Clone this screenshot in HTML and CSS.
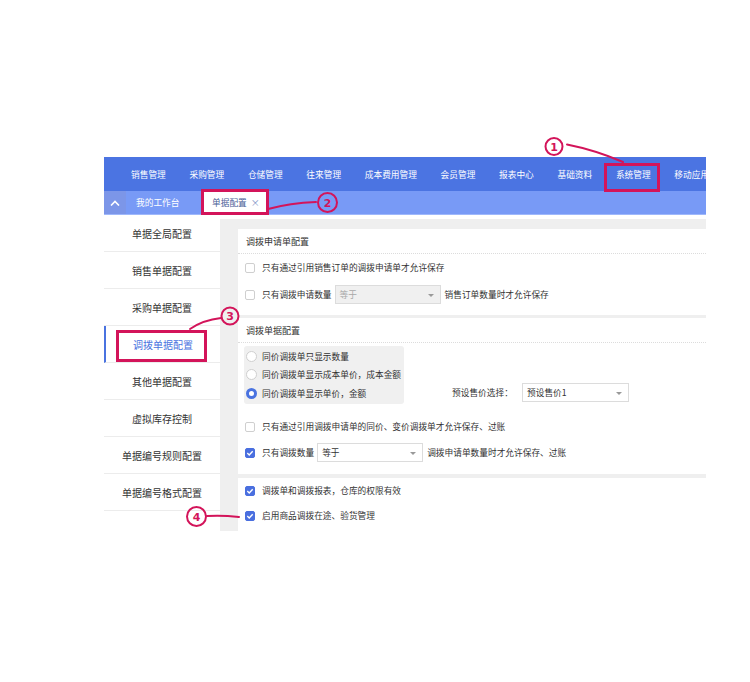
FILE: index.html
```html
<!DOCTYPE html>
<html lang="zh-CN">

<head>
  <meta charset="UTF-8">
  <meta name="viewport" content="width=device-width, initial-scale=1.0">
  <title>单据配置</title>
  <link rel="stylesheet" href="styles.css">
</head>

<body>
  <div class="app">
    <div class="topnav">
      <span>销售管理</span>
      <span>采购管理</span>
      <span>仓储管理</span>
      <span>往来管理</span>
      <span>成本费用管理</span>
      <span>会员管理</span>
      <span>报表中心</span>
      <span>基础资料</span>
      <span>系统管理</span>
      <span>移动应用</span>
    </div>

    <div class="tabbar">
      <div class="collapse">
        <svg width="10" height="6" viewBox="0 0 10 6"><path d="M1 5.5 L5 1.5 L9 5.5" fill="none" stroke="#fff" stroke-width="1.6"/></svg>
      </div>
      <div class="tab">我的工作台</div>
      <div class="tab active">单据配置 <span class="close">×</span></div>
    </div>

    <div class="main">
      <ul class="sidebar">
        <li>单据全局配置</li>
        <li>销售单据配置</li>
        <li>采购单据配置</li>
        <li class="current">调拨单据配置</li>
        <li>其他单据配置</li>
        <li>虚拟库存控制</li>
        <li>单据编号规则配置</li>
        <li>单据编号格式配置</li>
      </ul>

      <div class="content">
        <div class="panel panel-apply">
          <div class="panel-title">调拨申请单配置</div>
          <div class="row"><span class="check"></span>只有通过引用销售订单的调拨申请单才允许保存</div>
          <div class="row">
            <span class="check"></span>只有调拨申请数量
            <span class="select disabled">等于<i class="caret"></i></span>
            销售订单数量时才允许保存
          </div>
        </div>

        <div class="panel panel-transfer">
          <div class="panel-title">调拨单据配置</div>
          <div class="price-line">
            <div class="radio-group">
              <div class="radio-row"><span class="radio"></span>同价调拨单只显示数量</div>
              <div class="radio-row"><span class="radio"></span>同价调拨单显示成本单价，成本金额</div>
              <div class="radio-row"><span class="radio on"></span>同价调拨单显示单价，金额</div>
            </div>
            <div class="preset">
              <span class="preset-label">预设售价选择：</span>
              <span class="select">预设售价1<i class="caret"></i></span>
            </div>
          </div>
          <div class="rows">
            <div class="row"><span class="check"></span>只有通过引用调拨申请单的同价、变价调拨单才允许保存、过账</div>
            <div class="row">
              <span class="check on"><svg width="8" height="8" viewBox="0 0 8 8"><path d="M1.3 4.1 L3.2 5.9 L6.7 2.2" fill="none" stroke="#fff" stroke-width="1.4"/></svg></span>只有调拨数量
              <span class="select">等于<i class="caret"></i></span>
              调拨申请单数量时才允许保存、过账
            </div>
          </div>
        </div>

        <div class="panel panel-misc">
          <div class="row"><span class="check on"><svg width="8" height="8" viewBox="0 0 8 8"><path d="M1.3 4.1 L3.2 5.9 L6.7 2.2" fill="none" stroke="#fff" stroke-width="1.4"/></svg></span>调拨单和调拨报表，仓库的权限有效</div>
          <div class="row"><span class="check on"><svg width="8" height="8" viewBox="0 0 8 8"><path d="M1.3 4.1 L3.2 5.9 L6.7 2.2" fill="none" stroke="#fff" stroke-width="1.4"/></svg></span>启用商品调拨在途、验货管理</div>
        </div>
      </div>
    </div>
  </div>

  <!-- hand drawn markers over the screenshot -->
  <svg class="marks" width="750" height="682" viewBox="0 0 750 682">
    <g fill="none" stroke="#d3145a" stroke-width="3">
      <rect x="605.5" y="164.5" width="53" height="26"/>
      <rect x="202.5" y="190.5" width="65" height="23"/>
      <rect x="117.5" y="331.5" width="88" height="29"/>
    </g>
    <g fill="none" stroke="#d3145a" stroke-width="2" stroke-linecap="round">
      <circle cx="554" cy="146.5" r="8.5"/>
      <path d="M567 144.5 Q595 150 623 162"/>
      <circle cx="327.5" cy="202.5" r="9.5"/>
      <path d="M268 209 Q290 203 316 202"/>
      <circle cx="230" cy="316" r="8.5"/>
      <path d="M190 329 Q203 320 221 318"/>
      <circle cx="196.5" cy="516.5" r="9.5"/>
      <path d="M207 516 Q222 515 239 517"/>
    </g>
    <g class="mark-num" fill="#d3145a" text-anchor="middle">
      <text x="554" y="150.5">1</text>
      <text x="327.5" y="206.5">2</text>
      <text x="230" y="320">3</text>
      <text x="196.5" y="520.5">4</text>
    </g>
  </svg>
</body>

</html>
```

FILE: styles.css
```css
* {
  padding: 0;
  margin: 0;
  box-sizing: border-box;
}

body {
  background-color: white;
  font-family: "Noto Sans CJK SC", "Noto Sans", sans-serif;
  color: #333;
  position: relative;
  height: 682px;
  overflow: hidden;
}

.app {
  margin: 157px 0 0 104px;
  width: 602px;
  overflow: hidden;
}

.topnav {
  height: 34px;
  background-color: #4b74e2;
  display: flex;
  align-items: center;
  gap: 23.7px;
  padding-left: 27px;
  white-space: nowrap;
  font-size: 8.7px;
  color: white;
}

.tabbar {
  height: 24px;
  background-color: #789af6;
  border-bottom: 1px solid #9fb8fb;
  display: flex;
  align-items: stretch;
  font-size: 8.7px;
  color: white;
}

.collapse {
  width: 22px;
  background-color: #7c96e8;
  display: flex;
  align-items: center;
  justify-content: center;
}

.tab {
  display: flex;
  align-items: center;
  padding: 0 20px 0 10px;
  width: 78px;
}

.tab.active {
  width: 64px;
  background-color: white;
  color: #4a5e96;
  padding: 0 0 0 9px;
  margin-left: -1px;
}

.close {
  margin-left: 4px;
  color: #7a8fc4;
  font-size: 9px;
}

.main {
  display: flex;
  background-color: #efefef;
  height: 316px;
}

.sidebar {
  list-style: none;
  width: 116px;
  background-color: white;
}

.sidebar li {
  height: 37px;
  border-bottom: 1px solid #ececec;
  display: flex;
  align-items: center;
  justify-content: center;
  font-size: 10px;
  color: #333;
}

.sidebar li.current {
  color: #4a73e0;
  border-left: 2px solid #4a73e0;
}

.content {
  flex: 1;
  border-top: 4px solid white;
  padding: 10px 0 0 18px;
  display: flex;
  flex-direction: column;
  gap: 3px;
}

.panel {
  background-color: white;
  font-size: 8.7px;
}

.panel-title {
  height: 25px;
  display: flex;
  align-items: center;
  padding-left: 8px;
  border-bottom: 1px dotted #dcdcdc;
  font-size: 9px;
}

.panel-apply {
  height: 86px;
}

.row {
  height: 27px;
  display: flex;
  align-items: center;
  padding-left: 7px;
  white-space: nowrap;
}

.check {
  width: 10px;
  height: 10px;
  border: 1px solid #cfcfcf;
  border-radius: 2px;
  background-color: white;
  margin-right: 7px;
  display: flex;
  align-items: center;
  justify-content: center;
  flex-shrink: 0;
}

.check.on {
  background-color: #4a6fdf;
  border-color: #4a6fdf;
}

.select {
  position: relative;
  width: 106px;
  height: 19px;
  border: 1px solid #dcdcdc;
  display: flex;
  align-items: center;
  padding-left: 4px;
  margin: 0 4px 0 3px;
  background-color: white;
}

.select.disabled {
  background-color: #f0f0f0;
  color: #a8a8a8;
}

.caret {
  position: absolute;
  right: 6px;
  top: 8px;
  border-left: 3px solid transparent;
  border-right: 3px solid transparent;
  border-top: 3px solid #999;
}

.panel-transfer {
  height: 156px;
}

.price-line {
  display: flex;
  align-items: flex-end;
  padding: 3px 0 0 6px;
}

.radio-group {
  width: 160px;
  background-color: #f0f0f0;
  border-radius: 3px;
  padding: 1px 0;
}

.radio-row {
  height: 18.5px;
  display: flex;
  align-items: center;
  padding-left: 2px;
  white-space: nowrap;
}

.radio {
  width: 11px;
  height: 11px;
  border: 1px solid #cfcfcf;
  border-radius: 50%;
  background-color: white;
  margin-right: 5px;
}

.radio.on {
  border: 3px solid #4a73e0;
}

.preset {
  display: flex;
  align-items: center;
  margin: 0 0 2px 48px;
}

.preset-label {
  width: 70px;
}

.preset .select {
  width: 107px;
  margin: 0;
}

.rows {
  margin-top: 10px;
}

.rows .row {
  height: 26px;
}

.panel-misc {
  margin-top: 1px;
  height: 53px;
}

.panel-misc .row {
  height: 25px;
}

.marks {
  position: absolute;
  top: 0;
  left: 0;
  pointer-events: none;
}

.mark-num {
  font-family: "DejaVu Sans", sans-serif;
  font-size: 11px;
  font-weight: bold;
}
```
